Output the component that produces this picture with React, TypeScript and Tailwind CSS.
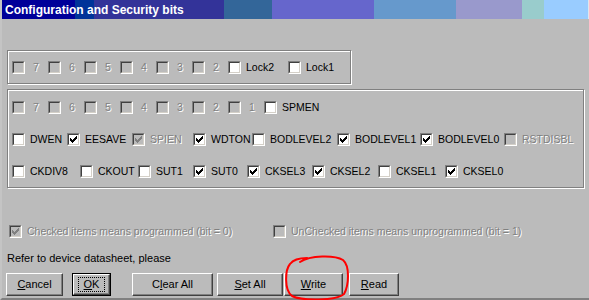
import React from "react";

type Item = { label: string; w: string; checked?: boolean; disabled?: boolean; digit?: boolean };

const lockRow: Item[] = [
  { label: "7", w: "w-[36px]", disabled: true, digit: true },
  { label: "6", w: "w-[36px]", disabled: true, digit: true },
  { label: "5", w: "w-[36px]", disabled: true, digit: true },
  { label: "4", w: "w-[36px]", disabled: true, digit: true },
  { label: "3", w: "w-[36px]", disabled: true, digit: true },
  { label: "2", w: "w-[36px]", disabled: true, digit: true },
  { label: "Lock2", w: "w-[60px]" },
  { label: "Lock1", w: "w-[56px]" },
];

const extRow: Item[] = [
  { label: "7", w: "w-[36px]", disabled: true, digit: true },
  { label: "6", w: "w-[36px]", disabled: true, digit: true },
  { label: "5", w: "w-[36px]", disabled: true, digit: true },
  { label: "4", w: "w-[36px]", disabled: true, digit: true },
  { label: "3", w: "w-[36px]", disabled: true, digit: true },
  { label: "2", w: "w-[36px]", disabled: true, digit: true },
  { label: "1", w: "w-[36px]", disabled: true, digit: true },
  { label: "SPMEN", w: "w-[70px]" },
];

const highRow: Item[] = [
  { label: "DWEN", w: "w-[55px]" },
  { label: "EESAVE", w: "w-[65px]", checked: true },
  { label: "SPIEN", w: "w-[61px]", checked: true, disabled: true },
  { label: "WDTON", w: "w-[59px]", checked: true },
  { label: "BODLEVEL2", w: "w-[85px]" },
  { label: "BODLEVEL1", w: "w-[83px]", checked: true },
  { label: "BODLEVEL0", w: "w-[84px]", checked: true },
  { label: "RSTDISBL", w: "w-[72px]", disabled: true },
];

const lowRow: Item[] = [
  { label: "CKDIV8", w: "w-[68px]" },
  { label: "CKOUT", w: "w-[58px]" },
  { label: "SUT1", w: "w-[55px]" },
  { label: "SUT0", w: "w-[54px]", checked: true },
  { label: "CKSEL3", w: "w-[65px]", checked: true },
  { label: "CKSEL2", w: "w-[66px]", checked: true },
  { label: "CKSEL1", w: "w-[67px]" },
  { label: "CKSEL0", w: "w-[70px]", checked: true },
];

const CheckMark = ({ disabled }: { disabled?: boolean }) => (
  <svg width="7" height="7" viewBox="0 0 7 7" shapeRendering="crispEdges" className="absolute left-[1px] top-[1px]">
    <path
      fill={disabled ? "#808080" : "#000000"}
      d="M0 2h1v3H0zM1 3h1v3H1zM2 4h1v3H2zM3 3h1v3H3zM4 2h1v3H4zM5 1h1v3H5zM6 0h1v3H6z"
    />
  </svg>
);

const Box = ({ checked, disabled }: { checked?: boolean; disabled?: boolean }) => (
  <span className="block h-[13px] w-[13px] shrink-0 border border-t-[#808080] border-l-[#808080] border-b-white border-r-white">
    <span
      className={`relative block h-full w-full border border-t-[#404040] border-l-[#404040] border-b-[#d4d0c8] border-r-[#d4d0c8] ${
        disabled ? "bg-[#bbbbbb]" : "bg-white"
      }`}
    >
      {checked && <CheckMark disabled={disabled} />}
    </span>
  </span>
);

const Check = ({ item }: { item: Item }) => (
  <div className={`flex h-[13px] shrink-0 items-center overflow-hidden ${item.w}`}>
    <Box checked={item.checked} disabled={item.disabled} />
    <span
      className={`whitespace-nowrap leading-[13px] ${item.digit ? "ml-[8px]" : "ml-[5px]"} ${
        item.disabled ? "text-[#808080] [text-shadow:1px_1px_0_#ffffff]" : "text-black"
      }`}
    >
      {item.label}
    </span>
  </div>
);

const Row = ({ items }: { items: Item[] }) => (
  <div className="flex">
    {items.map((it) => (
      <Check key={it.label} item={it} />
    ))}
  </div>
);

const Button = ({ w, children, focused }: { w: string; children: React.ReactNode; focused?: boolean }) => {
  const face = (
    <div className="flex h-full w-full items-center justify-center border border-t-white border-l-white border-b-[#404040] border-r-[#404040] shadow-[inset_-1px_-1px_0_#808080]">
      {focused ? (
        <span className="flex h-[15px] items-center border border-dotted border-black px-[5px] leading-[13px]">{children}</span>
      ) : (
        <span className="leading-[13px]">{children}</span>
      )}
    </div>
  );
  if (focused) {
    return <div className={`h-[23px] shrink-0 border border-black ${w}`}>{face}</div>;
  }
  return <div className={`h-[23px] shrink-0 ${w}`}>{face}</div>;
};

export default function App() {
  return (
    <div className="relative h-[300px] w-[589px] overflow-hidden bg-[#bbbbbb] font-['Liberation_Sans',Arial,sans-serif] text-[10.5px] text-black">
      <div className="flex h-full flex-col border-l-2 border-l-[#c4c4c4] border-b-2 border-b-[#808080]">
        {/* title bar */}
        <div className="flex h-[19px] shrink-0 items-center bg-[linear-gradient(to_right,#000099_0px,#000099_73px,#003399_73px,#003399_92px,#333399_92px,#333399_222px,#336699_222px,#336699_270px,#6666cc_270px,#6666cc_372px,#6699cc_372px,#6699cc_454px,#9999cc_454px,#9999cc_520px,#99cccc_520px,#99cccc_542px,#99ccff_542px,#99ccff_586px,#dde6ee_586px)] pl-[3px] text-[12px] font-bold text-white">
          Configuration and Security bits
        </div>

        {/* lock bits */}
        <div className="ml-[5px] mt-[31px] h-[34px] w-[344px] border border-[#808080] pl-[4px] pt-[10px] shadow-[1px_1px_0_#ffffff,inset_1px_1px_0_#ffffff]">
          <Row items={lockRow} />
        </div>

        {/* fuse bits */}
        <div className="ml-[5px] mt-[5px] flex h-[99px] w-[577px] flex-col gap-[19px] border border-[#808080] pl-[4px] pt-[11px] shadow-[1px_1px_0_#ffffff,inset_1px_1px_0_#ffffff]">
          <Row items={extRow} />
          <Row items={highRow} />
          <Row items={lowRow} />
        </div>

        {/* legend */}
        <div className="ml-[7px] mt-[37px] flex">
          <Check item={{ label: "Checked items means programmed (bit = 0)", w: "w-[264px]", checked: true, disabled: true }} />
          <Check item={{ label: "UnChecked items means unprogrammed (bit = 1)", w: "w-[280px]", disabled: true }} />
        </div>

        <div className="ml-[5px] mt-[14px] text-[11px] leading-[13px]">Refer to device datasheet, please</div>

        {/* buttons */}
        <div className="ml-[4px] mt-[8px] flex text-[11px]">
          <Button w="w-[57px]">
            <span className="underline">C</span>ancel
          </Button>
          <div className="ml-[9px]">
            <Button w="w-[39px]" focused>
              <span className="underline">O</span>K
            </Button>
          </div>
          <div className="ml-[21px] flex gap-[4px]">
            <Button w="w-[81px]">
              C<span className="underline">l</span>ear All
            </Button>
            <Button w="w-[66px]">
              <span className="underline">S</span>et All
            </Button>
          </div>
          <div className="ml-px flex gap-[6px]">
            <Button w="w-[59px]">
              <span className="underline">W</span>rite
            </Button>
            <Button w="w-[50px]">
              <span className="underline">R</span>ead
            </Button>
          </div>
        </div>
      </div>

      {/* red hand-drawn annotation */}
      <svg className="pointer-events-none absolute left-0 top-0" width="589" height="300" viewBox="0 0 589 300">
        <path
          d="M300 262 C310 255 335 255 343 260 C350 266 349 285 344 294 C336 301 302 301 292 296 C284 290 285 270 290 264 C293 260 300 258 307 258"
          fill="none"
          stroke="#ff0000"
          strokeWidth="2"
          strokeLinecap="round"
        />
      </svg>
    </div>
  );
}
